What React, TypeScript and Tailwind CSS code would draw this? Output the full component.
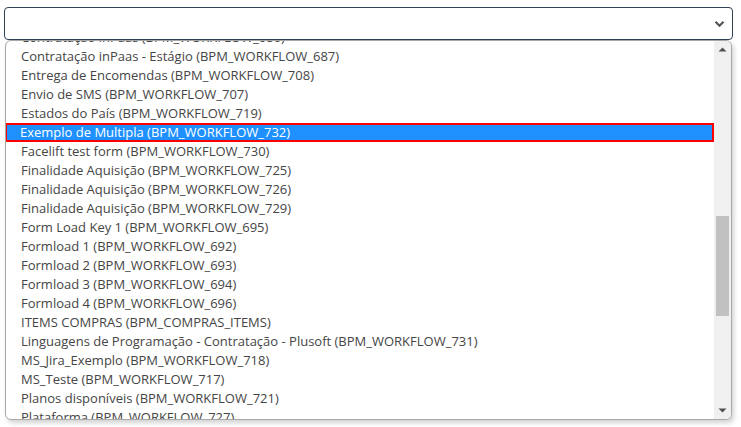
import React from 'react';

const items = [
  'Contratação inPaas (BPM_WORKFLOW_686)',
  'Contratação inPaas - Estágio (BPM_WORKFLOW_687)',
  'Entrega de Encomendas (BPM_WORKFLOW_708)',
  'Envio de SMS (BPM_WORKFLOW_707)',
  'Estados do País (BPM_WORKFLOW_719)',
  'Exemplo de Multipla (BPM_WORKFLOW_732)',
  'Facelift test form (BPM_WORKFLOW_730)',
  'Finalidade Aquisição (BPM_WORKFLOW_725)',
  'Finalidade Aquisição (BPM_WORKFLOW_726)',
  'Finalidade Aquisição (BPM_WORKFLOW_729)',
  'Form Load Key 1 (BPM_WORKFLOW_695)',
  'Formload 1 (BPM_WORKFLOW_692)',
  'Formload 2 (BPM_WORKFLOW_693)',
  'Formload 3 (BPM_WORKFLOW_694)',
  'Formload 4 (BPM_WORKFLOW_696)',
  'ITEMS COMPRAS (BPM_COMPRAS_ITEMS)',
  'Linguagens de Programação - Contratação - Plusoft (BPM_WORKFLOW_731)',
  'MS_Jira_Exemplo (BPM_WORKFLOW_718)',
  'MS_Teste (BPM_WORKFLOW_717)',
  'Planos disponíveis (BPM_WORKFLOW_721)',
  'Plataforma (BPM_WORKFLOW_727)',
];

const selected = 'Exemplo de Multipla (BPM_WORKFLOW_732)';

const App: React.FC = () => {
  return (
    <div className="w-[741px] h-[427px] bg-white overflow-hidden px-[4px] pt-[7px] font-['Open_Sans',sans-serif]">
      {/* closed select */}
      <div className="h-[33px] w-[729px] border border-[#2f4256] rounded-[4px] bg-white flex items-center justify-end pr-[7px]">
        <svg width="11" height="8" viewBox="0 0 11 8" className="mt-[1px]">
          <path d="M1.5 1.8 L5.5 5.8 L9.5 1.8" fill="none" stroke="#555" strokeWidth="2.2" />
        </svg>
      </div>

      {/* open list */}
      <div className="ml-[1px] w-[727px] h-[380px] border border-[#a8a8a8] rounded-[6px] bg-white flex overflow-hidden shadow-[2px_3px_5px_rgba(0,0,0,0.18)]">
        <div className="flex-1 overflow-hidden">
          <ul className="-mt-[13px] text-[13px] leading-[19px] text-[#454545]">
            {items.map((item) => (
              <li
                key={item}
                className={
                  item === selected
                    ? 'h-[19px] pl-[15px] whitespace-nowrap bg-[#1e90ff] text-white shadow-[inset_0_0_0_2px_#ff0000] -ml-px'
                    : 'h-[19px] pl-[15px] whitespace-nowrap'
                }
              >
                {item}
              </li>
            ))}
          </ul>
        </div>

        {/* scrollbar */}
        <div className="w-[17px] bg-[#f0f0f0] flex flex-col">
          <div className="h-[17px] flex items-center justify-center">
            <svg width="9" height="5" viewBox="0 0 9 5">
              <path d="M0.5 4.5 L4.5 0.5 L8.5 4.5 Z" fill="#505050" />
            </svg>
          </div>
          <div className="flex-1">
            <div className="mt-[158px] h-[100px] mx-[2px] bg-[#c1c1c1]" />
          </div>
          <div className="h-[17px] flex items-center justify-center">
            <svg width="9" height="5" viewBox="0 0 9 5">
              <path d="M0.5 0.5 L4.5 4.5 L8.5 0.5 Z" fill="#505050" />
            </svg>
          </div>
        </div>
      </div>
    </div>
  );
};

export default App;
